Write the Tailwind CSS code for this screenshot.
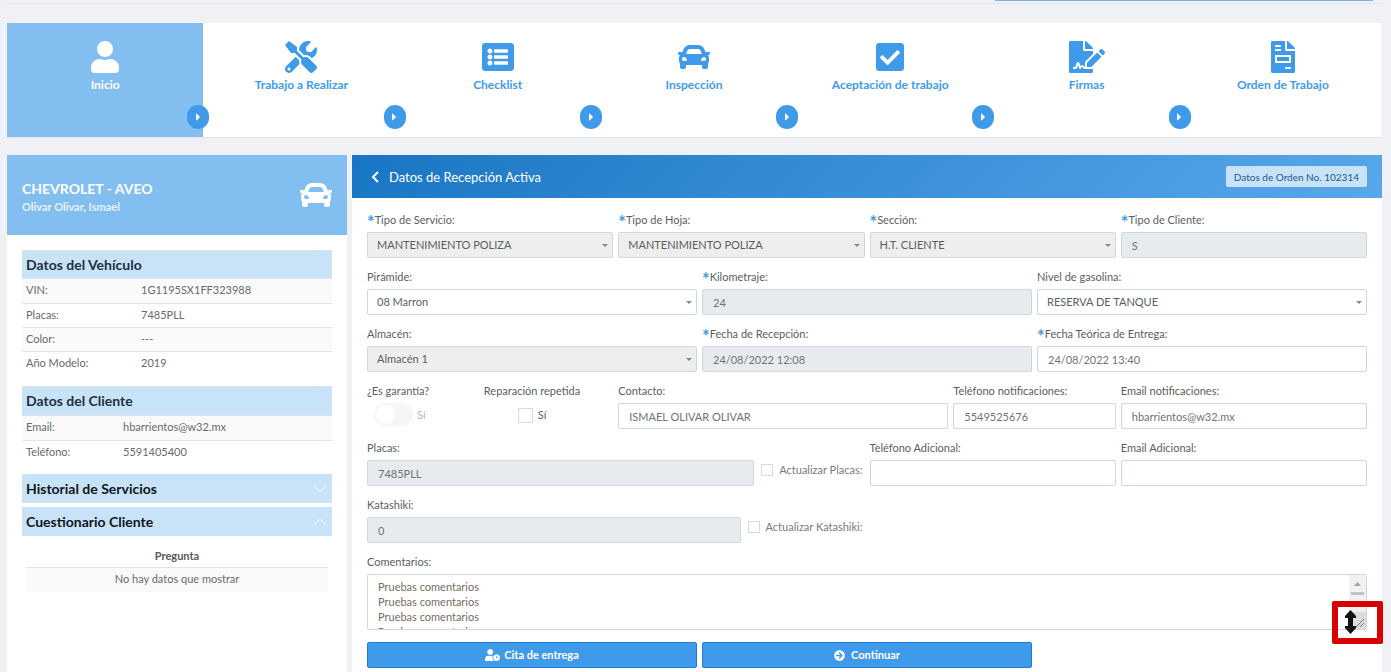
<!DOCTYPE html>
<html lang="es">
<head>
    <meta charset="UTF-8">
    <meta name="viewport" content="width=device-width, initial-scale=1.0">
    <title>Recepción Activa</title>
    <script src="https://cdn.jsdelivr.net/npm/@tailwindcss/browser@4"></script>
</head>
<body class="bg-[#eff1f5] min-h-screen flex flex-col overflow-hidden font-[Lato,'Open_Sans',sans-serif] text-[11px] leading-4 text-[#666a6e]">
    <!-- Borde inferior de la barra superior -->
    <div class="pl-[7px] pr-[10px]">
        <div class="h-1 border-b border-[#e2e5ec] flex justify-end pr-2">
            <div class="w-[378px] h-px bg-[#7db3e3]"></div>
        </div>
    </div>

    <!-- Pasos del proceso -->
    <nav class="ml-[7px] mr-[10px] mt-[19px] h-[115px] bg-white grid grid-cols-7 border-b border-[#e2e5ec] text-[#3f9be9] font-bold text-[12px]">
        <a href="#inicio" class="relative flex flex-col items-center pt-[18px] gap-1 bg-[#83bef0] text-white">
            <svg class="h-8 fill-current" viewBox="0 0 448 512"><path d="M224 256c70.7 0 128-57.3 128-128S294.7 0 224 0 96 57.3 96 128s57.3 128 128 128zm89.6 32h-16.7c-22.2 10.2-46.9 16-72.9 16s-50.6-5.8-72.9-16h-16.7C60.2 288 0 348.2 0 422.4V464c0 26.5 21.5 48 48 48h352c26.5 0 48-21.5 48-48v-41.6c0-74.2-60.2-134.4-134.4-134.4z"/></svg>
            Inicio
            <span class="absolute z-10 -right-[6px] bottom-2 w-[22px] h-6 rounded-full bg-[#3f9be9] flex items-center justify-center"><svg class="h-3 fill-white" viewBox="0 0 192 512"><path d="M0 384.662V127.338c0-17.818 21.543-26.741 34.142-14.142l128.662 128.662c7.81 7.81 7.81 20.474 0 28.284L34.142 398.804C21.543 411.404 0 402.48 0 384.662z"/></svg></span>
        </a>
        <a href="#trabajo" class="relative flex flex-col items-center pt-[18px] gap-1">
            <svg class="h-8 fill-current" viewBox="0 0 512 512"><path d="M501.1 395.7L384 278.6c-23.1-23.1-57.6-27.6-85.4-13.9L192 158.1V96L64 0 0 64l96 128h62.1l106.6 106.6c-13.6 27.8-9.2 62.3 13.9 85.4l117.1 117.1c14.6 14.6 38.2 14.6 52.7 0l52.7-52.7c14.5-14.6 14.5-38.2 0-52.7zM331.7 225c28.3 0 54.9 11 74.9 31l19.4 19.4c15.8-6.9 30.8-16.5 43.8-29.5 37.1-37.1 49.7-89.3 37.9-136.7-2.2-9-13.5-12.1-20.1-5.5l-74.4 74.4-67.9-11.3L334 98.9l74.4-74.4c6.6-6.6 3.4-17.9-5.7-20.2-47.4-11.7-99.6.9-136.6 37.9-28.5 28.5-41.9 66.1-41.2 103.6l82.1 82.1c8.1-1.9 16.5-2.9 24.7-2.9zm-103.9 82l-56.7-56.7L18.7 402.8c-25 25-25 65.5 0 90.5s65.5 25 90.5 0l123.6-123.6c-7.6-19.9-9.9-41.6-5-62.7zM64 472c-13.2 0-24-10.8-24-24 0-13.3 10.7-24 24-24s24 10.7 24 24c0 13.2-10.7 24-24 24z"/></svg>
            Trabajo a Realizar
            <span class="absolute z-10 -right-[6px] bottom-2 w-[22px] h-6 rounded-full bg-[#3f9be9] flex items-center justify-center"><svg class="h-3 fill-white" viewBox="0 0 192 512"><path d="M0 384.662V127.338c0-17.818 21.543-26.741 34.142-14.142l128.662 128.662c7.81 7.81 7.81 20.474 0 28.284L34.142 398.804C21.543 411.404 0 402.48 0 384.662z"/></svg></span>
        </a>
        <a href="#checklist" class="relative flex flex-col items-center pt-[18px] gap-1">
            <svg class="h-8 fill-current" viewBox="0 0 512 512"><path d="M464 480H48c-26.51 0-48-21.49-48-48V80c0-26.51 21.49-48 48-48h416c26.51 0 48 21.49 48 48v352c0 26.51-21.49 48-48 48zM128 120c-22.091 0-40 17.909-40 40s17.909 40 40 40 40-17.909 40-40-17.909-40-40-40zm0 96c-22.091 0-40 17.909-40 40s17.909 40 40 40 40-17.909 40-40-17.909-40-40-40zm0 96c-22.091 0-40 17.909-40 40s17.909 40 40 40 40-17.909 40-40-17.909-40-40-40zm288-136v-32c0-6.627-5.373-12-12-12H204c-6.627 0-12 5.373-12 12v32c0 6.627 5.373 12 12 12h200c6.627 0 12-5.373 12-12zm0 96v-32c0-6.627-5.373-12-12-12H204c-6.627 0-12 5.373-12 12v32c0 6.627 5.373 12 12 12h200c6.627 0 12-5.373 12-12zm0 96v-32c0-6.627-5.373-12-12-12H204c-6.627 0-12 5.373-12 12v32c0 6.627 5.373 12 12 12h200c6.627 0 12-5.373 12-12z"/></svg>
            Checklist
            <span class="absolute z-10 -right-[6px] bottom-2 w-[22px] h-6 rounded-full bg-[#3f9be9] flex items-center justify-center"><svg class="h-3 fill-white" viewBox="0 0 192 512"><path d="M0 384.662V127.338c0-17.818 21.543-26.741 34.142-14.142l128.662 128.662c7.81 7.81 7.81 20.474 0 28.284L34.142 398.804C21.543 411.404 0 402.48 0 384.662z"/></svg></span>
        </a>
        <a href="#inspeccion" class="relative flex flex-col items-center pt-[18px] gap-1">
            <svg class="h-8 fill-current" viewBox="0 0 512 512"><path d="M499.99 176h-59.87l-16.64-41.6C406.38 91.63 365.57 64 319.5 64h-127c-46.06 0-86.88 27.63-103.99 70.4L71.87 176H12.01C4.2 176-1.53 183.34.37 190.91l6 24C7.7 220.25 12.5 224 18.01 224h20.07C24.65 235.73 16 252.78 16 272v48c0 16.12 6.16 30.67 16 41.93V416c0 17.67 14.33 32 32 32h32c17.67 0 32-14.33 32-32v-32h256v32c0 17.67 14.33 32 32 32h32c17.67 0 32-14.33 32-32v-54.07c9.84-11.25 16-25.8 16-41.93v-48c0-19.22-8.65-36.27-22.07-48H494c5.51 0 10.31-3.75 11.64-9.09l6-24c1.89-7.57-3.84-14.91-11.65-14.91zm-352.06-17.83c7.29-18.22 24.94-30.17 44.57-30.17h127c19.63 0 37.28 11.95 44.57 30.17L384 208H128l19.93-49.83zM96 319.8c-19.2 0-32-12.76-32-31.9S76.8 256 96 256s48 28.71 48 47.85-28.8 15.95-48 15.95zm320 0c-19.2 0-48 3.19-48-15.95S396.8 256 416 256s32 12.76 32 31.9-12.8 31.9-32 31.9z"/></svg>
            Inspección
            <span class="absolute z-10 -right-[6px] bottom-2 w-[22px] h-6 rounded-full bg-[#3f9be9] flex items-center justify-center"><svg class="h-3 fill-white" viewBox="0 0 192 512"><path d="M0 384.662V127.338c0-17.818 21.543-26.741 34.142-14.142l128.662 128.662c7.81 7.81 7.81 20.474 0 28.284L34.142 398.804C21.543 411.404 0 402.48 0 384.662z"/></svg></span>
        </a>
        <a href="#aceptacion" class="relative flex flex-col items-center pt-[18px] gap-1">
            <svg class="h-8 fill-current" viewBox="0 0 448 512"><path d="M400 480H48c-26.51 0-48-21.49-48-48V80c0-26.51 21.49-48 48-48h352c26.51 0 48 21.49 48 48v352c0 26.51-21.49 48-48 48zm-204.686-98.059l184-184c6.248-6.248 6.248-16.379 0-22.627l-22.627-22.627c-6.248-6.248-16.379-6.249-22.628 0L184 302.745l-70.059-70.059c-6.248-6.248-16.379-6.248-22.628 0l-22.627 22.627c-6.248 6.248-6.248 16.379 0 22.627l104 104c6.249 6.25 16.379 6.25 22.628.001z"/></svg>
            Aceptación de trabajo
            <span class="absolute z-10 -right-[6px] bottom-2 w-[22px] h-6 rounded-full bg-[#3f9be9] flex items-center justify-center"><svg class="h-3 fill-white" viewBox="0 0 192 512"><path d="M0 384.662V127.338c0-17.818 21.543-26.741 34.142-14.142l128.662 128.662c7.81 7.81 7.81 20.474 0 28.284L34.142 398.804C21.543 411.404 0 402.48 0 384.662z"/></svg></span>
        </a>
        <a href="#firmas" class="relative flex flex-col items-center pt-[18px] gap-1">
            <svg class="h-8 fill-current" viewBox="0 0 576 512"><path d="M218.17 424.14c-2.95-5.92-8.09-6.52-10.17-6.52s-7.22.59-10.02 6.19l-7.67 15.34c-6.37 12.78-25.03 11.37-29.48-2.09L144 386.59l-10.61 31.88c-5.89 17.66-22.38 29.53-41 29.53H80c-8.84 0-16-7.16-16-16s7.16-16 16-16h12.39c4.83 0 9.11-3.08 10.64-7.66l18.19-54.64c3.3-9.81 12.44-16.41 22.78-16.41s19.48 6.59 22.77 16.41l13.88 41.64c19.75-16.19 54.06-9.7 66 14.16 1.89 3.78 5.49 5.95 9.36 6.26v-82.12l128-127.09V160H248c-13.2 0-24-10.8-24-24V0H24C10.7 0 0 10.7 0 24v464c0 13.3 10.7 24 24 24h336c13.3 0 24-10.7 24-24v-40l-128-.11c-16.12-.31-30.58-9.28-37.83-23.75zM384 121.9c0-6.3-2.5-12.4-7-16.9L279.1 7c-4.5-4.5-10.6-7-17-7H256v128h128v-6.1zm-96 225.06V416h68.99l161.68-162.78-67.88-67.88L288 346.96zm280.54-179.63l-31.87-31.87c-9.94-9.94-26.07-9.94-36.01 0l-27.25 27.25 67.88 67.88 27.25-27.25c9.95-9.94 9.95-26.07 0-36.01z"/></svg>
            Firmas
            <span class="absolute z-10 -right-[6px] bottom-2 w-[22px] h-6 rounded-full bg-[#3f9be9] flex items-center justify-center"><svg class="h-3 fill-white" viewBox="0 0 192 512"><path d="M0 384.662V127.338c0-17.818 21.543-26.741 34.142-14.142l128.662 128.662c7.81 7.81 7.81 20.474 0 28.284L34.142 398.804C21.543 411.404 0 402.48 0 384.662z"/></svg></span>
        </a>
        <a href="#orden" class="relative flex flex-col items-center pt-[18px] gap-1">
            <svg class="h-8 fill-current" viewBox="0 0 384 512"><path d="M288 256H96v64h192v-64zm89-151L279.1 7c-4.5-4.5-10.6-7-17-7H256v128h128v-6.1c0-6.3-2.5-12.4-7-16.9zm-153 31V0H24C10.7 0 0 10.7 0 24v464c0 13.3 10.7 24 24 24h336c13.3 0 24-10.7 24-24V160H248c-13.2 0-24-10.8-24-24zM64 72c0-4.42 3.58-8 8-8h80c4.42 0 8 3.58 8 8v16c0 4.42-3.58 8-8 8H72c-4.42 0-8-3.58-8-8V72zm0 64c0-4.42 3.58-8 8-8h80c4.42 0 8 3.58 8 8v16c0 4.42-3.58 8-8 8H72c-4.42 0-8-3.58-8-8v-16zm256 304c0 4.42-3.58 8-8 8h-80c-4.42 0-8-3.58-8-8v-16c0-4.42 3.58-8 8-8h80c4.42 0 8 3.58 8 8v16zm0-200v96c0 8.84-7.16 16-16 16H80c-8.84 0-16-7.16-16-16v-96c0-8.84 7.16-16 16-16h224c8.84 0 16 7.16 16 16z"/></svg>
            Orden de Trabajo
        </a>
    </nav>

    <div class="flex-1 flex gap-[5px] pl-[7px] pr-[9px] mt-[17px]">
        <!-- Panel del vehículo y cliente -->
        <aside class="w-[340px] shrink-0 bg-white">
            <div class="h-20 bg-[#83bef0] px-[15px] flex items-center justify-between text-white font-bold">
                <div class="pt-1">
                    <h2 class="text-[14px] leading-5">CHEVROLET - AVEO</h2>
                    <p class="text-[11px] leading-4 text-[#e6f2fc]">Olivar Olivar, Ismael</p>
                </div>
                <svg class="h-8 fill-current" viewBox="0 0 512 512"><path d="M499.99 176h-59.87l-16.64-41.6C406.38 91.63 365.57 64 319.5 64h-127c-46.06 0-86.88 27.63-103.99 70.4L71.87 176H12.01C4.2 176-1.53 183.34.37 190.91l6 24C7.7 220.25 12.5 224 18.01 224h20.07C24.65 235.73 16 252.78 16 272v48c0 16.12 6.16 30.67 16 41.93V416c0 17.67 14.33 32 32 32h32c17.67 0 32-14.33 32-32v-32h256v32c0 17.67 14.33 32 32 32h32c17.67 0 32-14.33 32-32v-54.07c9.84-11.25 16-25.8 16-41.93v-48c0-19.22-8.65-36.27-22.07-48H494c5.51 0 10.31-3.75 11.64-9.09l6-24c1.89-7.57-3.84-14.91-11.65-14.91zm-352.06-17.83c7.29-18.22 24.94-30.17 44.57-30.17h127c19.63 0 37.28 11.95 44.57 30.17L384 208H128l19.93-49.83zM96 319.8c-19.2 0-32-12.76-32-31.9S76.8 256 96 256s48 28.71 48 47.85-28.8 15.95-48 15.95zm320 0c-19.2 0-48 3.19-48-15.95S396.8 256 416 256s32 12.76 32 31.9-12.8 31.9-32 31.9z"/></svg>
            </div>
            <div class="p-[15px]">
                <table class="w-full border-separate border-spacing-0 table-fixed [&_td]:pb-[2px]">
                    <colgroup><col class="w-[115px]"><col></colgroup>
                    <thead>
                        <tr><th colspan="2" class="h-[29px] px-1 bg-[#c8e2f8] border-t border-b border-[#dfe3ec] text-left text-[14px] text-[#24303c]">Datos del Vehículo</th></tr>
                    </thead>
                    <tbody>
                        <tr class="bg-[#fafafa]"><td class="h-6 px-1">VIN:</td><td class="px-1">1G1195SX1FF323988</td></tr>
                        <tr><td class="h-6 px-1 border-t border-[#e2e5ee]">Placas:</td><td class="px-1 border-t border-[#e2e5ee]">7485PLL</td></tr>
                        <tr class="bg-[#fafafa]"><td class="h-6 px-1 border-t border-[#e2e5ee]">Color:</td><td class="px-1 border-t border-[#e2e5ee]">---</td></tr>
                        <tr><td class="h-6 px-1 border-t border-[#e2e5ee]">Año Modelo:</td><td class="px-1 border-t border-[#e2e5ee]">2019</td></tr>
                    </tbody>
                </table>
                <table class="w-full mt-[11px] border-separate border-spacing-0 table-fixed [&_td]:pb-[2px]">
                    <colgroup><col class="w-[97px]"><col></colgroup>
                    <thead>
                        <tr><th colspan="2" class="h-[30px] px-1 bg-[#c8e2f8] border-t border-b border-[#dfe3ec] text-left text-[14px] text-[#24303c]">Datos del Cliente</th></tr>
                    </thead>
                    <tbody>
                        <tr class="bg-[#fafafa]"><td class="h-6 px-1">Email:</td><td class="px-1">hbarrientos@w32.mx</td></tr>
                        <tr><td class="h-6 px-1 border-t border-[#e2e5ee]">Teléfono:</td><td class="px-1 border-t border-[#e2e5ee]">5591405400</td></tr>
                    </tbody>
                </table>
                <button type="button" class="mt-[10px] w-full h-[29px] px-1 bg-[#c8e2f8] flex items-center justify-between font-bold text-[14px] text-[#10151a]">
                    Historial de Servicios
                    <svg class="w-4 h-3 stroke-white fill-none" viewBox="0 0 16 12"><path d="M2 3l6 6 6-6"/></svg>
                </button>
                <button type="button" class="mt-1 w-full h-[29px] px-1 bg-[#c8e2f8] flex items-center justify-between font-bold text-[14px] text-[#10151a]">
                    Cuestionario Cliente
                    <svg class="w-4 h-3 stroke-white fill-none" viewBox="0 0 16 12"><path d="M2 9l6-6 6 6"/></svg>
                </button>
                <div class="px-1 pt-2">
                    <table class="w-full text-center border-separate border-spacing-0 [&_td]:pb-[2px]">
                        <thead><tr><th class="h-6 text-[11px] text-[#55595d] border-b border-[#e2e5ee]">Pregunta</th></tr></thead>
                        <tbody><tr><td class="h-6 bg-[#fafafa]">No hay datos que mostrar</td></tr></tbody>
                    </table>
                </div>
            </div>
        </aside>

        <!-- Formulario de recepción -->
        <main class="flex-1 min-w-0 bg-white">
            <header class="h-[43px] px-[15px] flex items-center bg-linear-135 from-[#1776c4] to-[#57a7ea] text-white">
                <button type="button" aria-label="Regresar" class="w-[22px] h-6 flex items-center pl-1"><svg class="w-[8px] h-[12px] stroke-white stroke-2 fill-none" viewBox="0 0 8 12"><path d="M7 1L2 6l5 5"/></svg></button>
                <h1 class="text-[13px]">Datos de Recepción Activa</h1>
                <button type="button" class="ml-auto h-[21px] px-2 rounded-xs bg-[#c8e2f8] text-[#1d5a8e] text-[10px]">Datos de Orden No. 102314</button>
            </header>

            <form class="px-[15px] pt-[14px] text-[#5a5e62]">
                <div class="grid grid-cols-12 gap-x-[5px] gap-y-[11px]">
                    <div class="col-span-3">
                        <label for="servicio" class="flex h-5"><span class="text-[18px] leading-5 text-[#3f9be9] font-bold">*</span>Tipo de Servicio:</label>
                        <div class="relative">
                            <select id="servicio" disabled class="block w-full h-[26px] pl-[9px] appearance-none rounded-xs border border-[#d0d7e4] bg-[#eeeeee] opacity-100"><option>MANTENIMIENTO POLIZA</option></select>
                            <svg class="absolute right-[5px] top-3 w-[6px] h-[3px] fill-[#888]" viewBox="0 0 6 3"><path d="M0 0h6L3 3z"/></svg>
                        </div>
                    </div>
                    <div class="col-span-3">
                        <label for="hoja" class="flex h-5"><span class="text-[18px] leading-5 text-[#3f9be9] font-bold">*</span>Tipo de Hoja:</label>
                        <div class="relative">
                            <select id="hoja" disabled class="block w-full h-[26px] pl-[9px] appearance-none rounded-xs border border-[#d0d7e4] bg-[#eeeeee] opacity-100"><option>MANTENIMIENTO POLIZA</option></select>
                            <svg class="absolute right-[5px] top-3 w-[6px] h-[3px] fill-[#888]" viewBox="0 0 6 3"><path d="M0 0h6L3 3z"/></svg>
                        </div>
                    </div>
                    <div class="col-span-3">
                        <label for="seccion" class="flex h-5"><span class="text-[18px] leading-5 text-[#3f9be9] font-bold">*</span>Sección:</label>
                        <div class="relative">
                            <select id="seccion" disabled class="block w-full h-[26px] pl-[9px] appearance-none rounded-xs border border-[#d0d7e4] bg-[#eeeeee] opacity-100"><option>H.T. CLIENTE</option></select>
                            <svg class="absolute right-[5px] top-3 w-[6px] h-[3px] fill-[#888]" viewBox="0 0 6 3"><path d="M0 0h6L3 3z"/></svg>
                        </div>
                    </div>
                    <div class="col-span-3">
                        <label for="tipo-cliente" class="flex h-5"><span class="text-[18px] leading-5 text-[#3f9be9] font-bold">*</span>Tipo de Cliente:</label>
                        <input id="tipo-cliente" type="text" disabled value="S" class="block w-full h-[26px] px-[10px] rounded-xs border border-[#d0d7e4] bg-[#e8ebee] text-[#6f7377]">
                    </div>

                    <div class="col-span-4">
                        <label for="piramide" class="flex h-5">Pirámide:</label>
                        <div class="relative">
                            <select id="piramide" class="block w-full h-[26px] pl-[9px] appearance-none rounded-xs border border-[#d0d7e4] bg-white"><option>08 Marron</option></select>
                            <svg class="absolute right-[5px] top-3 w-[6px] h-[3px] fill-[#888]" viewBox="0 0 6 3"><path d="M0 0h6L3 3z"/></svg>
                        </div>
                    </div>
                    <div class="col-span-4">
                        <label for="km" class="flex h-5"><span class="text-[18px] leading-5 text-[#3f9be9] font-bold">*</span>Kilometraje:</label>
                        <input id="km" type="text" disabled value="24" class="block w-full h-[26px] px-[10px] rounded-xs border border-[#d0d7e4] bg-[#e8ebee] text-[#6f7377]">
                    </div>
                    <div class="col-span-4">
                        <label for="gasolina" class="flex h-5">Nivel de gasolina:</label>
                        <div class="relative">
                            <select id="gasolina" class="block w-full h-[26px] pl-[9px] appearance-none rounded-xs border border-[#d0d7e4] bg-white"><option>RESERVA DE TANQUE</option></select>
                            <svg class="absolute right-[5px] top-3 w-[6px] h-[3px] fill-[#888]" viewBox="0 0 6 3"><path d="M0 0h6L3 3z"/></svg>
                        </div>
                    </div>

                    <div class="col-span-4">
                        <label for="almacen" class="flex h-5">Almacén:</label>
                        <div class="relative">
                            <select id="almacen" disabled class="block w-full h-[26px] pl-[9px] appearance-none rounded-xs border border-[#d0d7e4] bg-[#eeeeee] opacity-100"><option>Almacén 1</option></select>
                            <svg class="absolute right-[5px] top-3 w-[6px] h-[3px] fill-[#888]" viewBox="0 0 6 3"><path d="M0 0h6L3 3z"/></svg>
                        </div>
                    </div>
                    <div class="col-span-4">
                        <label for="recepcion" class="flex h-5"><span class="text-[18px] leading-5 text-[#3f9be9] font-bold">*</span>Fecha de Recepción:</label>
                        <input id="recepcion" type="text" disabled value="24/08/2022 12:08" class="block w-full h-[26px] px-[10px] rounded-xs border border-[#d0d7e4] bg-[#e8ebee] text-[#6f7377]">
                    </div>
                    <div class="col-span-4">
                        <label for="entrega" class="flex h-5"><span class="text-[18px] leading-5 text-[#3f9be9] font-bold">*</span>Fecha Teórica de Entrega:</label>
                        <input id="entrega" type="text" value="24/08/2022 13:40" class="block w-full h-[26px] px-[10px] rounded-xs border border-[#d0d7e4] bg-white text-[#6f7377]">
                    </div>

                    <div class="col-span-1">
                        <span class="block h-5 whitespace-nowrap">¿Es garantía?</span>
                        <label class="flex h-[23px] pl-[7px] items-center gap-1 text-[#b5b8bb]">
                            <input type="checkbox" disabled class="w-[39px] h-[23px] shrink-0 appearance-none rounded-full bg-[#f6f6f6] before:block before:size-[19px] before:m-[2px] before:rounded-full before:bg-white">Sí
                        </label>
                    </div>
                    <div class="col-span-2 flex flex-col items-center">
                        <span class="block h-5">Reparación repetida</span>
                        <label class="flex h-6 items-center gap-[5px]">
                            <input type="checkbox" class="size-[15px] appearance-none border border-[#d9dadd] bg-white">Sí
                        </label>
                    </div>
                    <div class="col-span-4">
                        <label for="contacto" class="flex h-5">Contacto:</label>
                        <input id="contacto" type="text" value="ISMAEL OLIVAR OLIVAR" class="block w-full h-[26px] px-[10px] rounded-xs border border-[#d0d7e4] bg-white text-[#6f7377]">
                    </div>
                    <div class="col-span-2">
                        <label for="tel" class="flex h-5 whitespace-nowrap">Teléfono notificaciones:</label>
                        <input id="tel" type="text" value="5549525676" class="block w-full h-[26px] px-[10px] rounded-xs border border-[#d0d7e4] bg-white text-[#6f7377]">
                    </div>
                    <div class="col-span-3">
                        <label for="email" class="flex h-5">Email notificaciones:</label>
                        <input id="email" type="text" value="hbarrientos@w32.mx" class="block w-full h-[26px] px-[10px] rounded-xs border border-[#d0d7e4] bg-white text-[#6f7377]">
                    </div>

                    <div class="col-span-6">
                        <label for="placas" class="flex h-5">Placas:</label>
                        <div class="flex gap-[7px] pr-[2px]">
                            <input id="placas" type="text" disabled value="7485PLL" class="flex-1 min-w-0 h-[26px] px-[10px] rounded-xs border border-[#d0d7e4] bg-[#e8ebee] text-[#6f7377]">
                            <label class="flex h-5 items-center gap-[6px] text-[#777b7f]"><input type="checkbox" class="size-3 appearance-none border border-[#d9dadd] bg-white">Actualizar Placas:</label>
                        </div>
                    </div>
                    <div class="col-span-3">
                        <label for="tel2" class="flex h-5">Teléfono Adicional:</label>
                        <input id="tel2" type="text" class="block w-full h-[26px] px-[10px] rounded-xs border border-[#d0d7e4] bg-white text-[#6f7377]">
                    </div>
                    <div class="col-span-3">
                        <label for="email2" class="flex h-5">Email Adicional:</label>
                        <input id="email2" type="text" class="block w-full h-[26px] px-[10px] rounded-xs border border-[#d0d7e4] bg-white text-[#6f7377]">
                    </div>

                    <div class="col-span-6">
                        <label for="katashiki" class="flex h-5">Katashiki:</label>
                        <div class="flex gap-[7px] pr-[2px]">
                            <input id="katashiki" type="text" disabled value="0" class="flex-1 min-w-0 h-[26px] px-[10px] rounded-xs border border-[#d0d7e4] bg-[#e8ebee] text-[#6f7377]">
                            <label class="flex h-5 items-center gap-[6px] text-[#777b7f]"><input type="checkbox" class="size-3 appearance-none border border-[#d9dadd] bg-white">Actualizar Katashiki:</label>
                        </div>
                    </div>

                    <div class="col-span-12">
                        <label for="comentarios" class="flex h-5">Comentarios:</label>
                        <div class="relative flex h-14 rounded-xs border border-[#d0d7e4] bg-white">
                            <textarea id="comentarios" class="flex-1 h-full px-[10px] pt-1 resize-none overflow-hidden leading-[15px] text-[#7b6a60]">Pruebas comentarios
Pruebas comentarios
Pruebas comentarios
Pruebas comentarios</textarea>
                            <div class="w-[17px] flex flex-col items-center justify-between bg-[#f1f1f1]">
                                <svg class="w-[13px] h-[21px]" viewBox="0 0 13 21"><path fill="#a3a3a3" d="M3 11l3.500-4 3.500 4z"/><path fill="#c1c1c1" d="M0 17h13v3H0z"/></svg>
                                <svg class="w-[17px] h-[17px] bg-[#dcdcdc] stroke-[#777] fill-none" viewBox="0 0 17 17"><path d="M7 15l8-8M11 15l4-4"/></svg>
                            </div>
                            <!-- Marca sobre el control de tamaño -->
                            <div class="absolute -right-[17px] top-[26px] w-[51px] h-[43px] rounded-xs border-[6px] border-[#d90000] pl-[7px] pt-[3px]">
                                <svg class="w-[11px] h-6" viewBox="0 0 11 24"><path d="M5.500 0L11 6v2H8v8h3v2l-5.500 6L0 18v-2h3V8H0V6z" fill="#111"/></svg>
                            </div>
                        </div>
                    </div>
                </div>
                <div class="mt-3 grid grid-cols-3 gap-x-[5px] text-white font-bold">
                    <button type="button" class="h-[26px] flex items-center justify-center gap-1 rounded-xs border border-[#1c7dd1] bg-[#3f9be9]">
                        <svg class="h-3 fill-current" viewBox="0 0 640 512"><path d="M496 224c-79.6 0-144 64.4-144 144s64.4 144 144 144 144-64.4 144-144-64.4-144-144-144zm64 150.3c0 5.3-4.4 9.7-9.7 9.7h-60.6c-5.3 0-9.7-4.4-9.7-9.7v-76.600c0-5.3 4.4-9.7 9.7-9.7h12.6c5.3 0 9.7 4.4 9.7 9.7V352h38.300c5.3 0 9.7 4.4 9.7 9.7v12.600zM320 368c0-27.8 6.7-54.1 18.2-77.5-8-1.5-16.2-2.5-24.6-2.5h-16.7c-22.2 10.2-46.9 16-72.9 16s-50.6-5.8-72.9-16h-16.7C60.2 288 0 348.2 0 422.4V464c0 26.5 21.5 48 48 48h347.1c-45.3-31.9-75.1-84.5-75.1-144zm-96-112c70.7 0 128-57.3 128-128S294.7 0 224 0 96 57.3 96 128s57.3 128 128 128z"/></svg>
                        Cita de entrega
                    </button>
                    <button type="button" class="h-[26px] flex items-center justify-center gap-[6px] rounded-xs border border-[#1c7dd1] bg-[#3f9be9]">
                        <svg class="h-[11px] fill-current" viewBox="0 0 512 512"><path d="M256 8c137 0 248 111 248 248S393 504 256 504 8 393 8 256 119 8 256 8zm-28.9 143.6l75.5 72.4H120c-13.3 0-24 10.7-24 24v16c0 13.3 10.7 24 24 24h182.600l-75.5 72.4c-9.7 9.3-9.9 24.8-.4 34.300l11 10.9c9.4 9.4 24.6 9.4 33.900 0L404.300 273c9.4-9.4 9.4-24.600 0-33.900L271.600 106.300c-9.4-9.4-24.6-9.4-33.9 0l-11 10.900c-9.5 9.6-9.3 25.1.4 34.400z"/></svg>
                        Continuar
                    </button>
                </div>
            </form>
        </main>
    </div>
</body>
</html>
